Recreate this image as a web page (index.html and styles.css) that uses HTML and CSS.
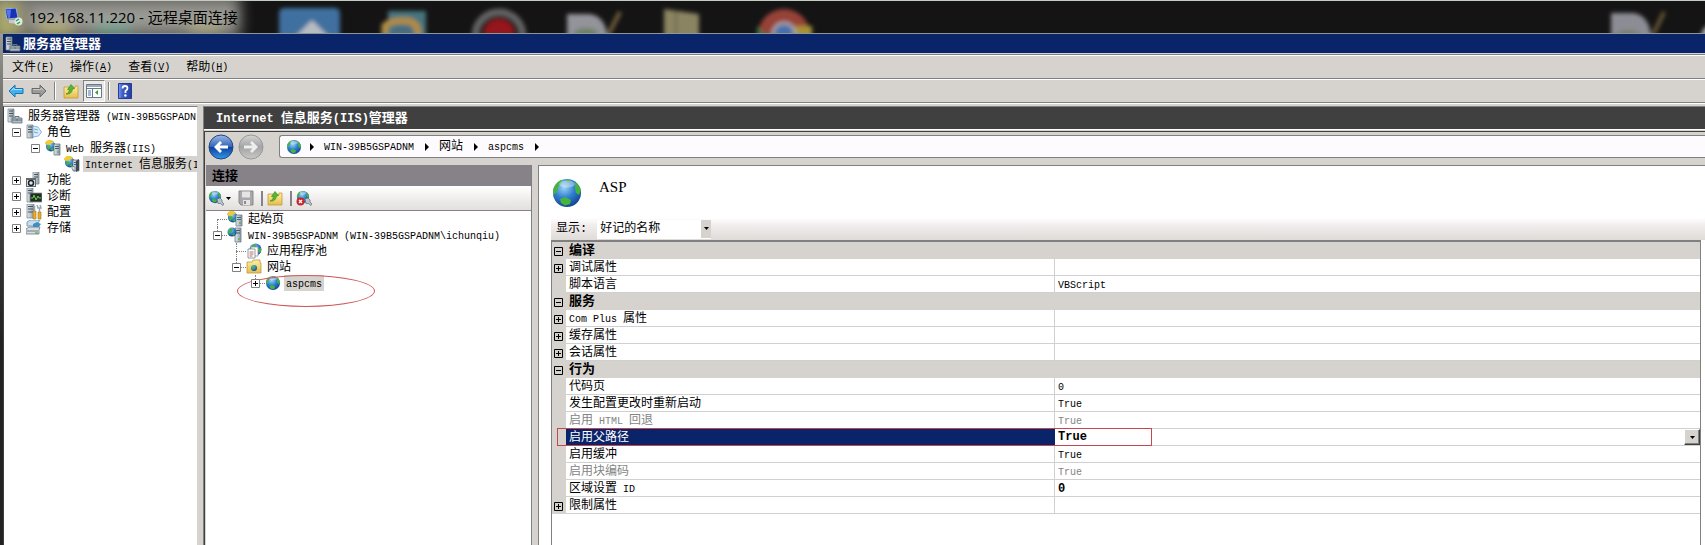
FILE: index.html
```html
<!DOCTYPE html>
<html lang="zh-CN">
<head>
<meta charset="utf-8">
<title>192.168.11.220 - 远程桌面连接</title>
<link rel="stylesheet" href="styles.css">
</head>
<body>
<svg class="defs" aria-hidden="true">
  <defs>
    <radialGradient id="sea" cx=".4" cy=".3" r=".75"><stop offset="0" stop-color="#9fd4f5"/><stop offset=".5" stop-color="#2f7fd0"/><stop offset="1" stop-color="#123f8c"/></radialGradient>
    <linearGradient id="steel" x2="1"><stop offset="0" stop-color="#e4eaee"/><stop offset="1" stop-color="#8b99a3"/></linearGradient>
    <linearGradient id="gold" y2="1" x2="0"><stop offset="0" stop-color="#fdf0a4"/><stop offset="1" stop-color="#e6bd4c"/></linearGradient>
    <linearGradient id="backBlue" x2="0" y2="1"><stop offset="0" stop-color="#9db9e6"/><stop offset=".48" stop-color="#3566bb"/><stop offset=".52" stop-color="#123f9e"/><stop offset="1" stop-color="#2f9bea"/></linearGradient>
    <linearGradient id="fwdGrey" x2="0" y2="1"><stop offset="0" stop-color="#d5d5d5"/><stop offset=".5" stop-color="#a3a3a3"/><stop offset="1" stop-color="#c9c9c9"/></linearGradient>
    <linearGradient id="helpBlue" x2="1"><stop offset="0" stop-color="#7f9be8"/><stop offset=".3" stop-color="#3f5fc8"/><stop offset="1" stop-color="#2440a4"/></linearGradient>
    <filter id="soft" x="-20%" y="-20%" width="140%" height="140%"><feGaussianBlur stdDeviation="2"/></filter>
    <filter id="haze" x="-30%" y="-60%" width="160%" height="220%"><feGaussianBlur stdDeviation="7"/></filter>
  </defs>
  <symbol id="globe" viewBox="0 0 16 16">
    <circle cx="8" cy="8" r="7" fill="url(#sea)"/>
    <path d="M1.500 5C2.500 3 4 1.800 5.500 1.400L5 3.500 3.500 5 3 7.500 1.200 9C.9 7.500 1 6.500 1.500 5zM12 2.500C13.500 3.500 14.700 5 14.900 7L14 9 12.500 8 12 5.500zM4.500 11L7 10 10 11.500 9.500 13.500 7 14.300 5 13zM7 1.500h3l-1 1.500z" fill="#45b43c"/>
    <ellipse cx="8" cy="3.500" rx="4" ry="1.800" fill="#fff" opacity=".35"/>
  </symbol>
  <symbol id="root" viewBox="0 0 16 16">
    <path d="M1 1h6v13H1z" fill="url(#steel)" stroke="#71808a" stroke-width=".7"/><path d="M2 3h4M2 5.500h4M2 8h4" stroke="#45545e"/>
    <path d="M5 10h10v5H5z" fill="#aebbc5" stroke="#63727c" stroke-width=".8"/><path d="M8 10V8.500h4V10M5 12h10M10 11v2" fill="none" stroke="#63727c"/>
  </symbol>
  <symbol id="roles" viewBox="0 0 16 16">
    <path d="M1 1h6v13H1z" fill="url(#steel)" stroke="#71808a" stroke-width=".7"/><path d="M2 3h4M2 5.500h4M2 8h4" stroke="#45545e"/>
    <path d="M7 2l5 1 3.500 5-3 4-5.500 1z" fill="#d9edfa" stroke="#71a7cf" stroke-width=".8"/><path d="M8 5l4 1M8 8l4 1" stroke="#5a8ebb" stroke-width=".8"/>
  </symbol>
  <symbol id="web" viewBox="0 0 16 16">
    <path d="M0 3C2-1 7-1 9 2L7 6H2z" fill="#f1ca35"/>
    <circle cx="6" cy="6.500" r="5" fill="url(#sea)"/><path d="M0 4Q1 0 6 0L9 3 6 3.500 3 5z" fill="#f1ca35"/><path d="M2 7l2-2 2 1-1 2-2 2zM5 9l3-1v3z" fill="#45b43c"/>
    <path d="M9 4h6v11H9z" fill="url(#steel)" stroke="#6c7a84" stroke-width=".8"/><path d="M10 6.500h4M10 8.500h4" stroke="#3f6a7c"/><path d="M12 12h2" stroke="#30b030"/>
  </symbol>
  <symbol id="iis" viewBox="0 0 16 16">
    <use href="#web"/><path d="M12 5l3-2v11l-3 2z" fill="#3d4a52"/><path d="M8 10l3 1v4l-3-2z" fill="#dce4ea" stroke="#56646e" stroke-width=".6"/>
  </symbol>
  <symbol id="site-server" viewBox="0 0 16 16">
    <path d="M8 1h6v14H8z" fill="url(#steel)" stroke="#6c7a84" stroke-width=".8"/><path d="M9 3.500h4M9 6h4" stroke="#3f5a6c"/><path d="M11 12h2" stroke="#30b030"/>
    <circle cx="5" cy="5" r="4.500" fill="url(#sea)"/><path d="M1 4l3-3 2 2-2 3-2 1zM5 7l3-1-1 3z" fill="#45b43c"/>
  </symbol>
  <symbol id="features" viewBox="0 0 16 16">
    <path d="M7 0h6v12H7z" fill="url(#steel)" stroke="#71808a" stroke-width=".7"/><path d="M8 2.500h4M8 5h4" stroke="#45545e"/>
    <path d="M0 6h10v9H0z" fill="#5e6b75"/><path d="M1 8h8v6H1z" fill="#dfe6ea"/><circle cx="5" cy="11" r="2.500" fill="none" stroke="#222" stroke-width="1.500"/>
  </symbol>
  <symbol id="diag" viewBox="0 0 16 16">
    <path d="M1 0h6v14H1z" fill="url(#steel)" stroke="#71808a" stroke-width=".7"/><path d="M2 2.500h4M2 5h4" stroke="#45545e"/>
    <path d="M4 5h12v9H4z" fill="#222b24" stroke="#8b969e" stroke-width=".8"/><path d="M5 10h2l1-3 2 5 2-4 1 2h2" fill="none" stroke="#69d03d"/>
  </symbol>
  <symbol id="config" viewBox="0 0 16 16">
    <path d="M1 0h7v14H1z" fill="url(#steel)" stroke="#71808a" stroke-width=".7"/><path d="M2 2.500h5M2 5h5M2 8h5" stroke="#45545e"/>
    <path d="M7 7h3v8H7zM12 8h3v7h-3z" fill="#e9ad28" stroke="#a5731a" stroke-width=".6"/><path d="M8.500 7V2M11 1l1 3h3l-1-3M13.500 4v4" fill="none" stroke="#9aa6ae" stroke-width="1.500"/>
  </symbol>
  <symbol id="storage" viewBox="0 0 16 16">
    <path d="M1 2l3-2h10l-2 3v3H1z" fill="#c5dff0" stroke="#6b8ba4" stroke-width=".8"/><path d="M7 4l4-2 4 2-3 4H7z" fill="#3f8fc5"/>
    <path d="M0 9l3-2h11l-1 3v4H0z" fill="#d7dde1" stroke="#6a7780" stroke-width=".8"/><path d="M1 11h11" stroke="#737f87"/><path d="M9 13h3" stroke="#35a535"/>
  </symbol>
  <symbol id="pool" viewBox="0 0 16 16">
    <circle cx="9.500" cy="6.500" r="6" fill="url(#sea)"/><path d="M5 3l4-2 2 3-3 1zM12 6l3-1v4l-2 1z" fill="#45b43c"/>
    <path d="M5 4h7v9H5z" fill="#fff" stroke="#8b98a5" stroke-width=".8"/><path d="M2 6h7v9H2z" fill="#fff" stroke="#77848f" stroke-width=".8"/><path d="M3.500 9h4M3.500 11h4M3.500 13h3" stroke="#bd6b5b"/>
  </symbol>
  <symbol id="sites" viewBox="0 0 16 16">
    <path d="M1 3h5l1-2h7v3h1v10H1z" fill="url(#gold)" stroke="#bf9a3a" stroke-width=".8"/><circle cx="8" cy="9" r="3" fill="url(#sea)"/><path d="M6 8l2-2 1 2-2 3z" fill="#45b43c"/>
  </symbol>
  <symbol id="up-folder" viewBox="0 0 16 16">
    <path d="M1 4h5l1 1h5V3h3v12H1z" fill="url(#gold)" stroke="#c49b34" stroke-width=".8"/><path d="M3 11C5 10.500 6 9 6.500 6.500L4.500 6.500 8 1.500 11.500 5.500 9.500 6C9 9.500 7 11.500 3 11z" fill="#58b72d" stroke="#34831b" stroke-width=".6"/>
  </symbol>
  <symbol id="connect" viewBox="0 0 16 16">
    <use href="#globe" width="14" height="14"/><path d="M9 9l3-1 2 2v2l2 2-1 1.500-2.500-2H10z" fill="#b9c5d0" stroke="#6a7988" stroke-width=".8"/>
  </symbol>
  <symbol id="disconnect" viewBox="0 0 16 16">
    <use href="#connect"/><circle cx="4.500" cy="11.500" r="4" fill="#c9252b"/><path d="M3 10l3 3M6 10l-3 3" stroke="#fff" stroke-width="1.300"/>
  </symbol>
  <symbol id="save" viewBox="0 0 16 16">
    <path d="M1 1h14v14H3l-2-2z" fill="#a8a7a9" stroke="#8b8a8c"/><path d="M4 1.500h8v6H4zM5 10h7v5H5z" fill="#e6e5e6"/><path d="M6 11h2v3H6z" fill="#8b8a8c"/>
  </symbol>
  <symbol id="minus" viewBox="0 0 9 9"><path d="M.5.5h8v8h-8z" fill="#fff" stroke="#808080"/><path d="M2 4.500h5" stroke="#000"/></symbol>
  <symbol id="plus" viewBox="0 0 9 9"><use href="#minus"/><path d="M4.500 2v5" stroke="#000"/></symbol>
  <symbol id="gminus" viewBox="0 0 9 9"><path d="M.5.5h8v8h-8z" fill="none" stroke="#000"/><path d="M2 4.500h5" stroke="#000"/></symbol>
  <symbol id="gplus" viewBox="0 0 9 9"><use href="#gminus"/><path d="M4.500 2v5" stroke="#000"/></symbol>
  <symbol id="down" viewBox="0 0 5 3"><path d="M0 0h5L2.500 3z"/></symbol>
  <symbol id="right" viewBox="0 0 4 8"><path d="M0 0v8l4-4z"/></symbol>
</svg>

<header class="remote">
  <svg class="desktop" aria-hidden="true">
    <g filter="url(#haze)">
      <path d="M-10-10h250v50H-10z" fill="#77766f"/><path d="M-10 0h30v40h-30z" fill="#a8a66d"/><path d="M40 22h30v12H40z" fill="#b8af5a"/><path d="M95 22h35v12H95z" fill="#5fa08a"/><path d="M190 18h30v15h-30z" fill="#b0a978"/><path d="M30 8h210v16H30z" fill="#a2a29d"/>
    </g>
    <g filter="url(#soft)">
      <rect x="279" y="7" width="61" height="40" rx="5" fill="#416f9f"/><path d="M312 19l20 20h-40z" fill="#b7bcc2"/>
      <path d="M388 10h38v26h-38z" fill="#47747e"/><path d="M385 36V25q6-6 22-5 12 1 11 16" fill="none" stroke="#b08c45" stroke-width="7"/><path d="M394 26h18v10h-18z" fill="#4a6c80"/>
      <circle cx="499" cy="35" r="24" fill="#241e1e" stroke="#626262" stroke-width="7"/><circle cx="499" cy="33" r="15" fill="#95191d"/>
      <path d="M567 13h22q18 2 18 25h-40z" fill="#93939a"/><ellipse cx="586" cy="33" rx="12" ry="6" fill="#6e8063"/><path d="M607 36l13-25" stroke="#74603a" stroke-width="4"/>
      <path d="M664 8l35 5v30h-35z" fill="#8b8462"/><path d="M676 10v26" stroke="#69644b" stroke-width="2"/>
      <circle cx="784" cy="34" r="26" fill="#964239"/><path d="M757 25l16 16h-16z" fill="#347348"/><path d="M794 25h18v20h-18z" fill="#a79136"/><circle cx="784" cy="33" r="11" fill="#4a6fac" stroke="#a9a5a7" stroke-width="3"/>
      <path d="M1611 12h22q17 2 18 25h-40z" fill="#8c8c94"/><ellipse cx="1628" cy="34" rx="12" ry="5" fill="#788069"/><path d="M1652 36l12-25" stroke="#6b5836" stroke-width="4"/><circle cx="1714" cy="36" r="13" fill="#aaa"/>
    </g>
  </svg>
  <svg class="rdp-icon" viewBox="0 0 18 18" aria-hidden="true"><path d="M0 1l11-1 2 10-11 1z" fill="#1732b4" stroke="#a7b9ea" stroke-width=".8"/><path d="M1 2l5-.5L5 10H3z" fill="#5574e8"/><path d="M4 12l7 0 2 4-9-1z" fill="#c5c9cf"/><circle cx="13.500" cy="13.500" r="4" fill="#dcebe2"/><path d="M11 13l3-2M12 16l3-2" stroke="#3a9a58" stroke-width="1.500"/></svg>
  <h1 class="remote-title">192.168.11.220 - 远程桌面连接</h1>
</header>

<div class="window">
  <div class="caption"><svg class="ico" aria-hidden="true"><use href="#root"/></svg><h2>服务器管理器</h2></div>
  <nav class="menu">
    <button>文件<i>(<u>F</u>)</i></button><button>操作<i>(<u>A</u>)</i></button><button>查看<i>(<u>V</u>)</i></button><button>帮助<i>(<u>H</u>)</i></button>
  </nav>
  <div class="tools">
    <button aria-label="后退"><svg class="ico" viewBox="0 0 16 16"><path d="M1 8l6-6v3.500h8v5H7V14z" fill="#3fb1ec" stroke="#1873b5"/><path d="M3.500 7.500L6 5v1.500h8" fill="none" stroke="#a9e0fb"/></svg></button>
    <button aria-label="前进"><svg class="ico" viewBox="0 0 16 16"><path d="M15 8L9 2v3.500H1v5h8V14z" fill="#9b9b9b" stroke="#696969"/><path d="M2 6.500h8V5l2.500 2.500" fill="none" stroke="#c9c9c9"/></svg></button>
    <span class="sep"></span>
    <button aria-label="向上"><svg class="ico"><use href="#up-folder"/></svg></button>
    <button class="pressed" aria-label="显示控制台树"><svg class="ico" viewBox="0 0 16 16"><path d="M.5 1.500h15v13H.5z" fill="#fff" stroke="#6b7785"/><path d="M1 3h14" stroke="#9babc0" stroke-width="2"/><path d="M1 5.500h14M6.500 5v9" stroke="#6b7785"/><path d="M2 8h3M2 10h3M2 12h3" stroke="#4573b5"/><path d="M12 7v5L9 9.500z" fill="#3c9a3a"/></svg></button>
    <span class="sep"></span>
    <button aria-label="帮助"><svg class="ico" viewBox="0 0 16 16"><path d="M1.500.500h13v15h-13z" fill="url(#helpBlue)" stroke="#223c98"/><path d="M5.500 5.500Q5.500 3 8 3t2.500 2.300Q10.500 7 8.500 8v2" fill="none" stroke="#fff" stroke-width="1.800"/><circle cx="8.400" cy="12.500" r="1.200" fill="#fff"/></svg></button>
  </div>

  <div class="main">
    <aside class="console">
      <ul class="tree">
        <li><svg class="ico"><use href="#root"/></svg><span class="label">服务器管理器<i> (WIN-39B5GSPADN</i></span></li>
        <li><span class="cell"><svg class="box"><use href="#minus"/></svg></span><svg class="ico"><use href="#roles"/></svg><span class="label">角色</span></li>
        <li><span class="cell"></span><span class="cell"><svg class="box"><use href="#minus"/></svg></span><svg class="ico"><use href="#web"/></svg><span class="label"><i>Web </i>服务器<i>(IIS)</i></span></li>
        <li><span class="cell"></span><span class="cell"></span><span class="cell"></span><svg class="ico"><use href="#iis"/></svg><span class="label on"><i>Internet </i>信息服务<i>(I</i></span></li>
        <li><span class="cell"><svg class="box"><use href="#plus"/></svg></span><svg class="ico"><use href="#features"/></svg><span class="label">功能</span></li>
        <li><span class="cell"><svg class="box"><use href="#plus"/></svg></span><svg class="ico"><use href="#diag"/></svg><span class="label">诊断</span></li>
        <li><span class="cell"><svg class="box"><use href="#plus"/></svg></span><svg class="ico"><use href="#config"/></svg><span class="label">配置</span></li>
        <li><span class="cell"><svg class="box"><use href="#plus"/></svg></span><svg class="ico"><use href="#storage"/></svg><span class="label">存储</span></li>
      </ul>
    </aside>

    <section class="iis">
      <h2 class="iis-title"><i>Internet </i>信息服务<i>(IIS)</i>管理器</h2>
      <div class="iis-body">
        <div class="nav">
          <div class="travel">
            <button aria-label="后退"><svg viewBox="0 0 26 26"><circle cx="13" cy="13" r="12" fill="url(#backBlue)" stroke="#24457f"/><path d="M6 13l6-6 2 2-2.500 2.500H20v3h-8.500L14 17l-2 2z" fill="#fff"/></svg></button>
            <button aria-label="前进"><svg viewBox="0 0 26 26"><circle cx="13" cy="13" r="12" fill="url(#fwdGrey)" stroke="#999"/><path d="M20 13l-6-6-2 2 2.500 2.500H6v3h8.500L12 17l2 2z" fill="#eee"/></svg></button>
          </div>
          <div class="address">
            <svg class="ico"><use href="#globe"/></svg><svg class="arrow"><use href="#right"/></svg>
            <a href="#server"><i>WIN-39B5GSPADNM</i></a><svg class="arrow"><use href="#right"/></svg>
            <a href="#sites">网站</a><svg class="arrow"><use href="#right"/></svg>
            <a href="#aspcms"><i>aspcms</i></a><svg class="arrow"><use href="#right"/></svg>
          </div>
        </div>

        <div class="panes">
          <aside class="connections">
            <h3>连接</h3>
            <div class="conn-tools">
              <button aria-label="连接"><svg class="ico"><use href="#connect"/></svg><svg class="down"><use href="#down"/></svg></button>
              <button aria-label="保存"><svg class="ico"><use href="#save"/></svg></button>
              <span class="bar"></span>
              <button aria-label="向上"><svg class="ico"><use href="#up-folder"/></svg></button>
              <span class="bar"></span>
              <button aria-label="断开"><svg class="ico"><use href="#disconnect"/></svg></button>
            </div>
            <ul class="tree lines">
              <li><span class="cell first"></span><svg class="ico"><use href="#web"/></svg><span class="label">起始页</span></li>
              <li><span class="cell last"><svg class="box"><use href="#minus"/></svg></span><svg class="ico"><use href="#site-server"/></svg><span class="label"><i>WIN-39B5GSPADNM (WIN-39B5GSPADNM\ichunqiu)</i></span></li>
              <li><span class="cell"></span><span class="cell tee"></span><svg class="ico"><use href="#pool"/></svg><span class="label">应用程序池</span></li>
              <li><span class="cell"></span><span class="cell last"><svg class="box"><use href="#minus"/></svg></span><svg class="ico"><use href="#sites"/></svg><span class="label">网站</span></li>
              <li class="marked"><span class="cell"></span><span class="cell"></span><span class="cell last"><svg class="box"><use href="#plus"/></svg></span><svg class="ico"><use href="#globe"/></svg><span class="label on"><i>aspcms</i></span><span class="ring"></span></li>
            </ul>
          </aside>

          <main class="feature">
            <div class="feature-head"><svg class="big" aria-hidden="true"><use href="#globe"/></svg><h2>ASP</h2></div>
            <div class="filter">
              <label for="show">显示:</label>
              <span class="combo"><select id="show"><option>好记的名称</option></select><span class="combo-btn"><svg class="down"><use href="#down"/></svg></span></span>
            </div>
            <div class="grid-wrap">
              <table class="props">
                <colgroup><col class="c-gutter"><col class="c-name"><col></colgroup>
                <tbody>
                  <tr class="cat"><td><svg class="box"><use href="#gminus"/></svg></td><th colspan="2">编译</th></tr>
                  <tr><td><svg class="box"><use href="#gplus"/></svg></td><th>调试属性</th><td></td></tr>
                  <tr><td></td><th>脚本语言</th><td><i>VBScript</i></td></tr>
                  <tr class="cat"><td><svg class="box"><use href="#gminus"/></svg></td><th colspan="2">服务</th></tr>
                  <tr><td><svg class="box"><use href="#gplus"/></svg></td><th><i>Com Plus </i>属性</th><td></td></tr>
                  <tr><td><svg class="box"><use href="#gplus"/></svg></td><th>缓存属性</th><td></td></tr>
                  <tr><td><svg class="box"><use href="#gplus"/></svg></td><th>会话属性</th><td></td></tr>
                  <tr class="cat"><td><svg class="box"><use href="#gminus"/></svg></td><th colspan="2">行为</th></tr>
                  <tr><td></td><th>代码页</th><td><i>0</i></td></tr>
                  <tr><td></td><th>发生配置更改时重新启动</th><td><i>True</i></td></tr>
                  <tr class="dim"><td></td><th>启用<i> HTML </i>回退</th><td><i>True</i></td></tr>
                  <tr class="sel"><td></td><th>启用父路径<span class="frame"></span></th><td><div class="edit"><i class="strong">True</i><button aria-label="选择值"><svg class="down"><use href="#down"/></svg></button></div></td></tr>
                  <tr><td></td><th>启用缓冲</th><td><i>True</i></td></tr>
                  <tr class="dim"><td></td><th>启用块编码</th><td><i>True</i></td></tr>
                  <tr><td></td><th>区域设置<i> ID</i></th><td><i class="strong">0</i></td></tr>
                  <tr><td><svg class="box"><use href="#gplus"/></svg></td><th>限制属性</th><td></td></tr>
                </tbody>
              </table>
            </div>
          </main>
        </div>
      </div>
    </section>
  </div>
</div>
</body>
</html>
```
FILE: styles.css
```css
* { box-sizing: border-box; }

body {
  margin: 0;
  height: 100vh;
  display: flex;
  flex-direction: column;
  overflow: hidden;
  background: #d6d3ce;
  color: #000;
  font: 12px/16px "Liberation Mono", "Noto Sans CJK SC", monospace;
}

h1, h2, h3, ul { margin: 0; padding: 0; font-size: 12px; }
ul { list-style: none; }
svg { display: block; flex: none; }
button { border: 0; padding: 0; background: none; color: inherit; font: inherit; display: flex; align-items: center; }
a { color: inherit; text-decoration: none; }

/* Latin runs are half the width of the ideographs */
i { font-size: 10px; line-height: 1; font-style: normal; white-space: pre; }

.defs { position: absolute; width: 0; height: 0; }
.ico { width: 16px; height: 16px; }
.box { width: 9px; height: 9px; }
.down { width: 5px; height: 3px; }

/* Remote session title */
.remote {
  position: relative;
  flex: none;
  height: 34px;
  display: flex;
  align-items: center;
  gap: 6px;
  padding-left: 5px;
  overflow: hidden;
  background: #141414;
  border-top: 1px solid #c3cdc6;
  border-bottom: 1px solid #8f9898;
}
.desktop { position: absolute; left: 0; top: 0; width: 100%; height: 100%; }
.rdp-icon { position: relative; width: 18px; height: 18px; }
.remote-title {
  position: relative;
  font: 15px/20px "Open Sans", "Noto Sans CJK SC", sans-serif;
  white-space: nowrap;
}

/* Server manager window */
.window {
  flex: 1;
  min-height: 0;
  display: flex;
  flex-direction: column;
  border-left: 3px solid;
  border-image: linear-gradient(#9b9b93, #4c4c4e 25%, #222 60%) 1;
}
.caption {
  flex: none;
  height: 19px;
  display: flex;
  align-items: center;
  gap: 2px;
  padding-left: 2px;
  background: #0a246a;
  color: #fff;
}
.caption h2 { padding-top: 2px; font-size: 13px; font-weight: 700; }

.menu, .tools {
  flex: none;
  display: flex;
  align-items: center;
  height: 24px;
  border-top: 1px solid #fff;
  border-bottom: 1px solid #808080;
}
.menu { margin-top: 2px; gap: 16px; padding: 2px 0 0 9px; box-shadow: 0 -1px #808080; }
.tools { gap: 7px; padding-left: 5px; }
.tools .sep { width: 2px; height: 18px; border-left: 1px solid #808080; border-right: 1px solid #fff; }
.tools .pressed {
  width: 22px;
  height: 22px;
  margin: 0 -4px 0 -3px;
  justify-content: center;
  background: #eceae7;
  border: 1px solid;
  border-color: #808080 #fff #fff #808080;
}

.main {
  flex: 1;
  min-height: 0;
  display: flex;
  gap: 5px;
  border-top: 1px solid #fff;
  padding-top: 2px;
}
.console {
  flex: none;
  width: 195px;
  overflow: hidden;
  background: #fff;
  border: 1px solid #808080;
  border-left-color: #404040;
  border-right-color: #d6d3ce;
  border-bottom: 0;
  padding-top: 1px;
}

/* Trees */
.tree { padding-left: 3px; }
.tree li { display: flex; align-items: center; height: 16px; white-space: nowrap; font-weight: 400; }
.tree .cell { flex: none; width: 19px; height: 16px; display: flex; align-items: center; justify-content: center; position: relative; }
.tree .box { position: relative; z-index: 1; }
.tree .label { margin-left: 3px; padding: 2px 2px 0; line-height: 14px; }
.tree .on { background: #d6d3ce; }
.tree.lines { padding-left: 2px; }
.first::after, .last::after, .tee::after {
  content: "";
  position: absolute;
  left: 9px;
  right: 0;
  top: 8px;
  border-top: 1px dotted #808080;
}
.first::before, .last::before, .tee::before {
  content: "";
  position: absolute;
  left: 9px;
  top: 0;
  height: 8px;
  border-left: 1px dotted #808080;
}
.first::before { top: 8px; }
.tee::before { height: 16px; }
.marked { position: relative; }
.ring {
  position: absolute;
  left: 29px;
  top: 0;
  width: 138px;
  height: 32px;
  border: 1px solid #d0585c;
  border-radius: 50%;
}

/* IIS manager */
.iis { flex: 1; min-width: 0; display: flex; flex-direction: column; border-left: 1px solid #808080; border-top: 1px solid #808080; }
.iis-title {
  flex: none;
  height: 23px;
  padding: 1px 0 0 12px;
  background: #404040;
  border-bottom: 1px solid #fff;
  color: #fff;
  font-size: 13px;
  line-height: 22px;
}
.iis-title i { font-size: 12px; }
.iis-body { flex: 1; min-height: 0; display: flex; flex-direction: column; margin-top: 1px; border-top: 1px solid #404040; border-left: 1px solid #404040; }
.nav { flex: none; display: flex; align-items: center; gap: 15px; height: 33px; padding: 0 0 4px 3px; }
.travel { display: flex; gap: 4px; }
.travel svg { width: 26px; height: 26px; }
.address {
  flex: 1;
  height: 23px;
  display: flex;
  align-items: center;
  gap: 10px;
  padding-left: 6px;
  background: #fdfbfd;
  border: 1px solid #808080;
  border-right: 0;
  border-radius: 3px 0 0 3px;
}
.address .ico { margin-right: -3px; }
.address .arrow { width: 4px; height: 8px; margin-left: 1px; }

.panes { flex: 1; min-height: 0; display: flex; gap: 6px; }
.connections { flex: none; width: 327px; background: #fff; border-left: 1px solid #d6d3ce; border-right: 1px solid #808080; }
.connections h3 { height: 21px; padding-left: 6px; background: #868288; font-size: 13px; line-height: 23px; }
.conn-tools {
  height: 25px;
  display: flex;
  align-items: center;
  gap: 7px;
  padding-left: 2px;
  background: linear-gradient(#fff, #e2dfdc);
  border-bottom: 1px solid #868288;
}
.conn-tools button { gap: 2px; }
.conn-tools .bar { width: 2px; height: 15px; margin-right: -3px; background: #868288; }

.feature { flex: 1; min-width: 0; display: flex; flex-direction: column; background: #fff; border: 1px solid #808080; border-width: 1px 0 0 1px; padding-left: 12px; }
.feature-head { flex: none; display: flex; gap: 16px; height: 52px; padding-top: 11px; }
.feature-head .big { width: 32px; height: 32px; }
.feature-head h2 { font: 15px/20px "Liberation Serif", serif; }
.filter { flex: none; display: flex; align-items: center; gap: 10px; height: 22px; padding-left: 5px; background: linear-gradient(#fff, #f3eeee 30%, #dedbd7); }
.combo { position: relative; display: flex; width: 114px; height: 19px; }
.combo select {
  width: 100%;
  appearance: none;
  border: 0;
  border-radius: 0;
  padding: 0 12px 0 3px;
  background: #fff;
  color: #000;
  font: inherit;
}
.combo-btn { position: absolute; right: 0; top: 0; width: 10px; height: 18px; display: flex; align-items: center; justify-content: center; background: #d6d3ce; pointer-events: none; }

.grid-wrap { flex: 1; min-height: 0; margin-right: 4px; border: 1px solid #808080; border-top-width: 2px; border-bottom: 0; }
.props { width: 100%; table-layout: fixed; border-collapse: separate; border-spacing: 0; }
.c-gutter { width: 14px; }
.c-name { width: 42.6%; }
.props th, .props td { height: 17px; padding: 2px 0 0 3px; font-weight: 400; text-align: left; line-height: 14px; border-bottom: 1px solid #d0d0d0; white-space: nowrap; }
.props th { position: relative; border-right: 1px solid #d0d0d0; }
.props td:first-child { background: #d6d3ce; border-color: #d6d3ce; padding-left: 2px; }
.props .cat th { background: #d6d3ce; border-color: #d6d3ce; font-size: 13px; font-weight: 700; }
.props .dim { color: #848484; }
.props .sel th { background: #0a246a; color: #fff; border-color: #0a246a; }
.props .sel td { padding-top: 0; }
.strong { font-size: 12px; font-weight: 700; }
.edit { display: flex; align-items: center; justify-content: space-between; height: 16px; }
.edit button { width: 16px; height: 16px; justify-content: center; background: #d6d3ce; border: 1px solid; border-color: #fff #404040 #404040 #fff; box-shadow: inset -1px -1px #808080; }
.frame { position: absolute; z-index: 1; left: -9px; right: -98px; top: -1px; bottom: -1px; border: 1px solid #c8474c; }
```
